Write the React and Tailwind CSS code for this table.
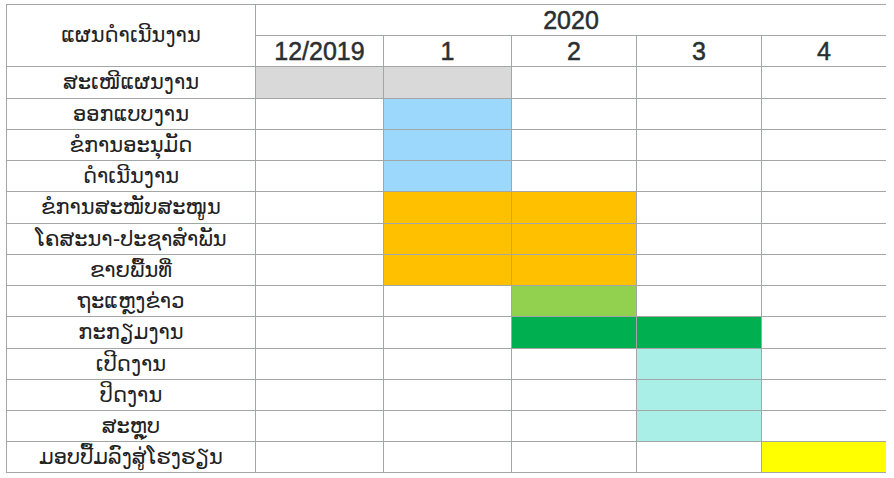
import React from "react";

const G = "bg-[#d9d9d9]";
const B = "bg-[#9cd8fb]";
const O = "bg-[#ffc000]";
const LG = "bg-[#92d050]";
const DG = "bg-[#00b050]";
const T = "bg-[#a9efe8]";
const Y = "bg-[#ffff00]";
const W = "bg-white";

const rows = [
  { label: "ສະເໜີແຜນງານ", cells: [G, G, W, W, W] },
  { label: "ອອກແບບງານ", cells: [W, B, W, W, W] },
  { label: "ຂໍການອະນຸມັດ", cells: [W, B, W, W, W] },
  { label: "ດຳເນີນງານ", cells: [W, B, W, W, W] },
  { label: "ຂໍການສະໜັບສະໜູນ", cells: [W, O, O, W, W] },
  { label: "ໂຄສະນາ-ປະຊາສຳພັນ", cells: [W, O, O, W, W] },
  { label: "ຂາຍພື້ນທີ່", cells: [W, O, O, W, W] },
  { label: "ຖະແຫຼງຂ່າວ", cells: [W, W, LG, W, W] },
  { label: "ກະກຽມງານ", cells: [W, W, DG, DG, W] },
  { label: "ເປີດງານ", cells: [W, W, W, T, W] },
  { label: "ປິດງານ", cells: [W, W, W, T, W] },
  { label: "ສະຫຼຸບ", cells: [W, W, W, T, W] },
  { label: "ມອບປື້ມລົງສູ່ໂຮງຮຽນ", cells: [W, W, W, W, Y] },
];

export default function App() {
  return (
    <div className="w-[894px] h-[478px] bg-white pt-[4px] pl-[6px]">
      <div className="grid w-[880px] bg-[#a3a6a6] border border-[#a3a6a6] gap-px grid-cols-[248px_127px_127px_124px_124px_124px] grid-rows-[30px_30px_31px_30px_30px_30px_31px_30px_30px_30px_31px_30px_30px_30px_30px]">
        <div className="row-span-2 bg-white flex items-center justify-center text-[21px] text-[#222] font-['DejaVu_Sans',sans-serif]">
          ແຜນດຳເນີນງານ
        </div>
        <div className="col-span-5 bg-white flex items-center justify-center text-[25px] text-[#2a2f31] leading-none pt-[1px] font-['Liberation_Sans',Arial,sans-serif] [-webkit-text-stroke:0.5px_#2a2f31]">
          2020
        </div>
        {["12/2019", "1", "2", "3", "4"].map((t) => (
          <div
            key={t}
            className="bg-white flex items-center justify-center text-[25px] text-[#2a2f31] leading-none pt-[1px] font-['Liberation_Sans',Arial,sans-serif] [-webkit-text-stroke:0.5px_#2a2f31]"
          >
            {t}
          </div>
        ))}
        {rows.map((r, i) => (
          <React.Fragment key={i}>
            <div className="bg-white flex items-center justify-center text-[21px] text-[#222] leading-none font-['DejaVu_Sans',sans-serif]">
              {r.label}
            </div>
            {r.cells.map((c, j) => (
              <div key={j} className={c} />
            ))}
          </React.Fragment>
        ))}
      </div>
    </div>
  );
}
